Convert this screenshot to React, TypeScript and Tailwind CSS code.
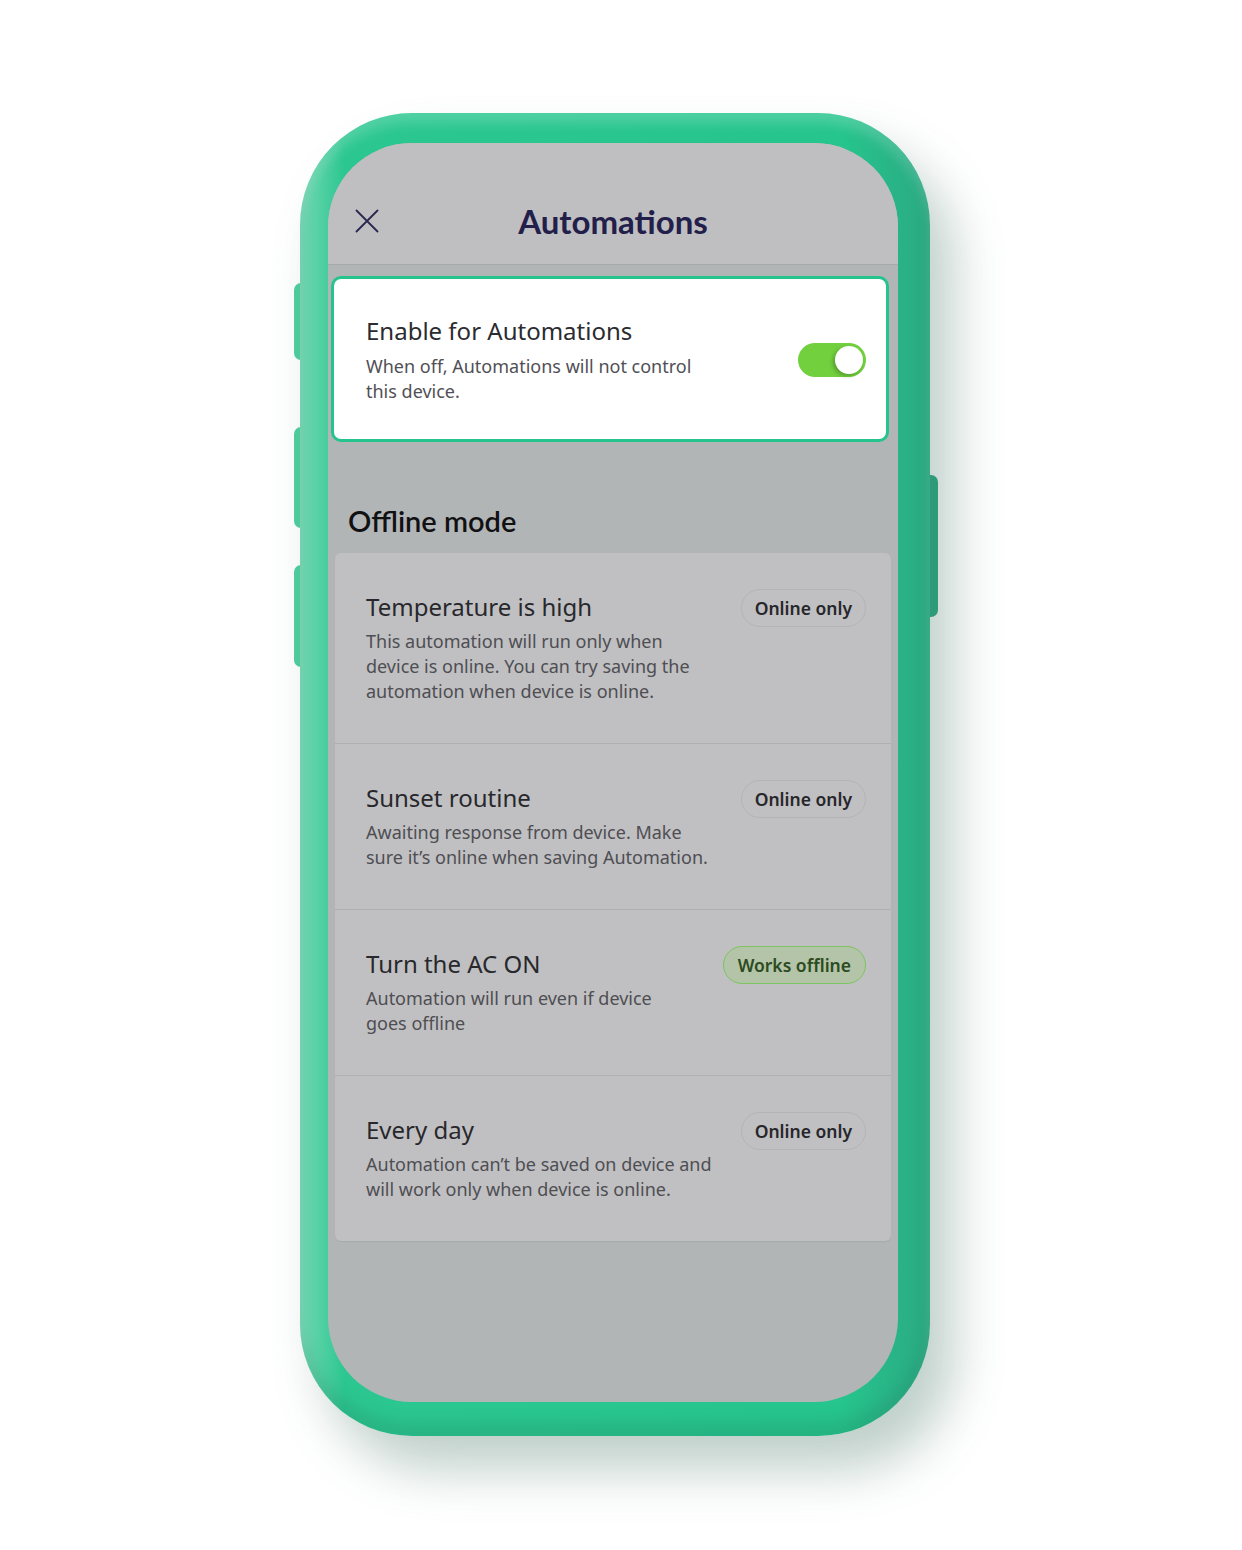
import React from "react";

// Automation rows shown under "Offline mode"
const automations = [
  {
    title: "Temperature is high",
    lines: [
      "This automation will run only when",
      "device is online. You can try saving the",
      "automation when device is online.",
    ],
    offline: false,
  },
  {
    title: "Sunset routine",
    lines: ["Awaiting response from device. Make", "sure it’s online when saving Automation."],
    offline: false,
  },
  {
    title: "Turn the AC ON",
    lines: ["Automation will run even if device", "goes offline"],
    offline: true,
  },
  {
    title: "Every day",
    lines: ["Automation can’t be saved on device and", "will work only when device is online."],
    offline: false,
  },
];

const bodyFont = "font-['Noto_Sans',sans-serif]";
const headFont = "font-['Lato',sans-serif]";

const CloseIcon = () => (
  <svg width="24" height="24" viewBox="0 0 24 24" fill="none">
    <path d="M1.5 1.5L22.5 22.5M22.5 1.5L1.5 22.5" stroke="#2a2850" strokeWidth="1.8" strokeLinecap="round" />
  </svg>
);

const Toggle = () => (
  <div className="w-[68px] h-[34px] rounded-full bg-[#72d03e] flex items-center justify-end pr-[3px] shrink-0">
    <div className="w-[28px] h-[28px] rounded-full bg-white shadow-[-2px_2px_4px_rgba(0,0,0,0.25)]" />
  </div>
);

const Badge = ({ offline }: { offline: boolean }) =>
  offline ? (
    <div className="h-[38px] px-[14px] rounded-full border-[1.5px] border-[#7cc45f] bg-[#b3c4a8] flex items-center text-[17.5px] font-semibold text-[#2c4b1f] whitespace-nowrap">
      Works offline
    </div>
  ) : (
    <div className="h-[38px] px-[13px] rounded-full border-[1.5px] border-[#b4b4b7] flex items-center text-[17.5px] font-semibold text-[#26262b] whitespace-nowrap">
      Online only
    </div>
  );

const AutomationRow = ({
  title,
  lines,
  offline,
  last,
}: {
  title: string;
  lines: string[];
  offline: boolean;
  last: boolean;
}) => (
  <div
    className={`flex justify-between pl-[31px] pr-[25px] pt-[36px] pb-[39px] ${
      last ? "" : "border-b border-[#b0b0b3]"
    }`}
  >
    <div className="pt-[2px]">
      <p className="text-[24px] leading-[32px] text-[#28282c]">{title}</p>
      <div className="mt-[6px] text-[18px] leading-[25px] text-[#4e4e53]">
        {lines.map((l, i) => (
          <p key={i}>{l}</p>
        ))}
      </div>
    </div>
    <div>
      <Badge offline={offline} />
    </div>
  </div>
);

function PhoneScreen() {
  return (
    <div className={`w-[570px] h-[1259px] rounded-[84px] overflow-hidden bg-[#b2b5b6] flex flex-col ${bodyFont}`}>
      {/* header */}
      <div className="h-[122px] shrink-0 bg-[#bfbfc1] border-b border-[#a7aaab] flex items-end pb-[31px] pl-[27px] pr-[27px]">
        <CloseIcon />
        <h1 className={`flex-1 text-center pr-[24px] ${headFont} font-bold text-[33px] leading-[40px] text-[#22204a] -mb-[8px]`}>
          Automations
        </h1>
      </div>

      {/* enable card */}
      <div className="mt-[11px] ml-[3px] w-[558px] rounded-[10px] border-[3px] border-[#25c48d] bg-white flex items-center justify-between pl-[32px] pr-[20px] pt-[36px] pb-[35px]">
        <div>
          <p className="text-[24px] leading-[32px] text-[#2b2b30]">Enable for Automations</p>
          <div className="mt-[7px] text-[18px] leading-[25px] text-[#505056]">
            <p>When off, Automations will not control</p>
            <p>this device.</p>
          </div>
        </div>
        <Toggle />
      </div>

      {/* offline mode */}
      <h2 className={`mt-[61px] ml-[20px] ${headFont} font-semibold text-[29px] leading-[36px] text-[#111114]`}>
        Offline mode
      </h2>
      <div className="mt-[14px] ml-[7px] w-[556px] rounded-[6px] bg-[#c0c0c2] shadow-[0_1px_1px_rgba(0,0,0,0.06)]">
        {automations.map((a, i) => (
          <AutomationRow key={i} {...a} last={i === automations.length - 1} />
        ))}
      </div>
    </div>
  );
}

export default function App() {
  return (
    <main className="w-[1242px] h-[1550px] bg-white pt-[113px] pl-[300px]">
      <div className="relative w-[630px] h-[1323px]">
        {/* side buttons */}
        <div className="absolute left-[-6px] top-[170px] w-[20px] h-[77px] rounded-[7px] bg-[#4fcfa0]" />
        <div className="absolute left-[-6px] top-[314px] w-[20px] h-[101px] rounded-[7px] bg-[#4fcfa0]" />
        <div className="absolute left-[-6px] top-[452px] w-[20px] h-[102px] rounded-[7px] bg-[#4fcfa0]" />
        <div className="absolute right-[-8px] top-[362px] w-[20px] h-[142px] rounded-[7px] bg-[#2aab83]" />

        {/* frame */}
        <div className="relative w-[630px] h-[1323px] rounded-[112px] bg-[linear-gradient(90deg,#74d8b3_0%,#2cc791_7%,#26c58d_86%,#2ba982_100%)] shadow-[24px_34px_50px_rgba(60,110,90,0.32),inset_0_-14px_14px_rgba(30,120,90,0.22),inset_0_10px_12px_rgba(255,255,255,0.18)] pt-[30px] pl-[28px]">
          <PhoneScreen />
        </div>
      </div>
    </main>
  );
}
